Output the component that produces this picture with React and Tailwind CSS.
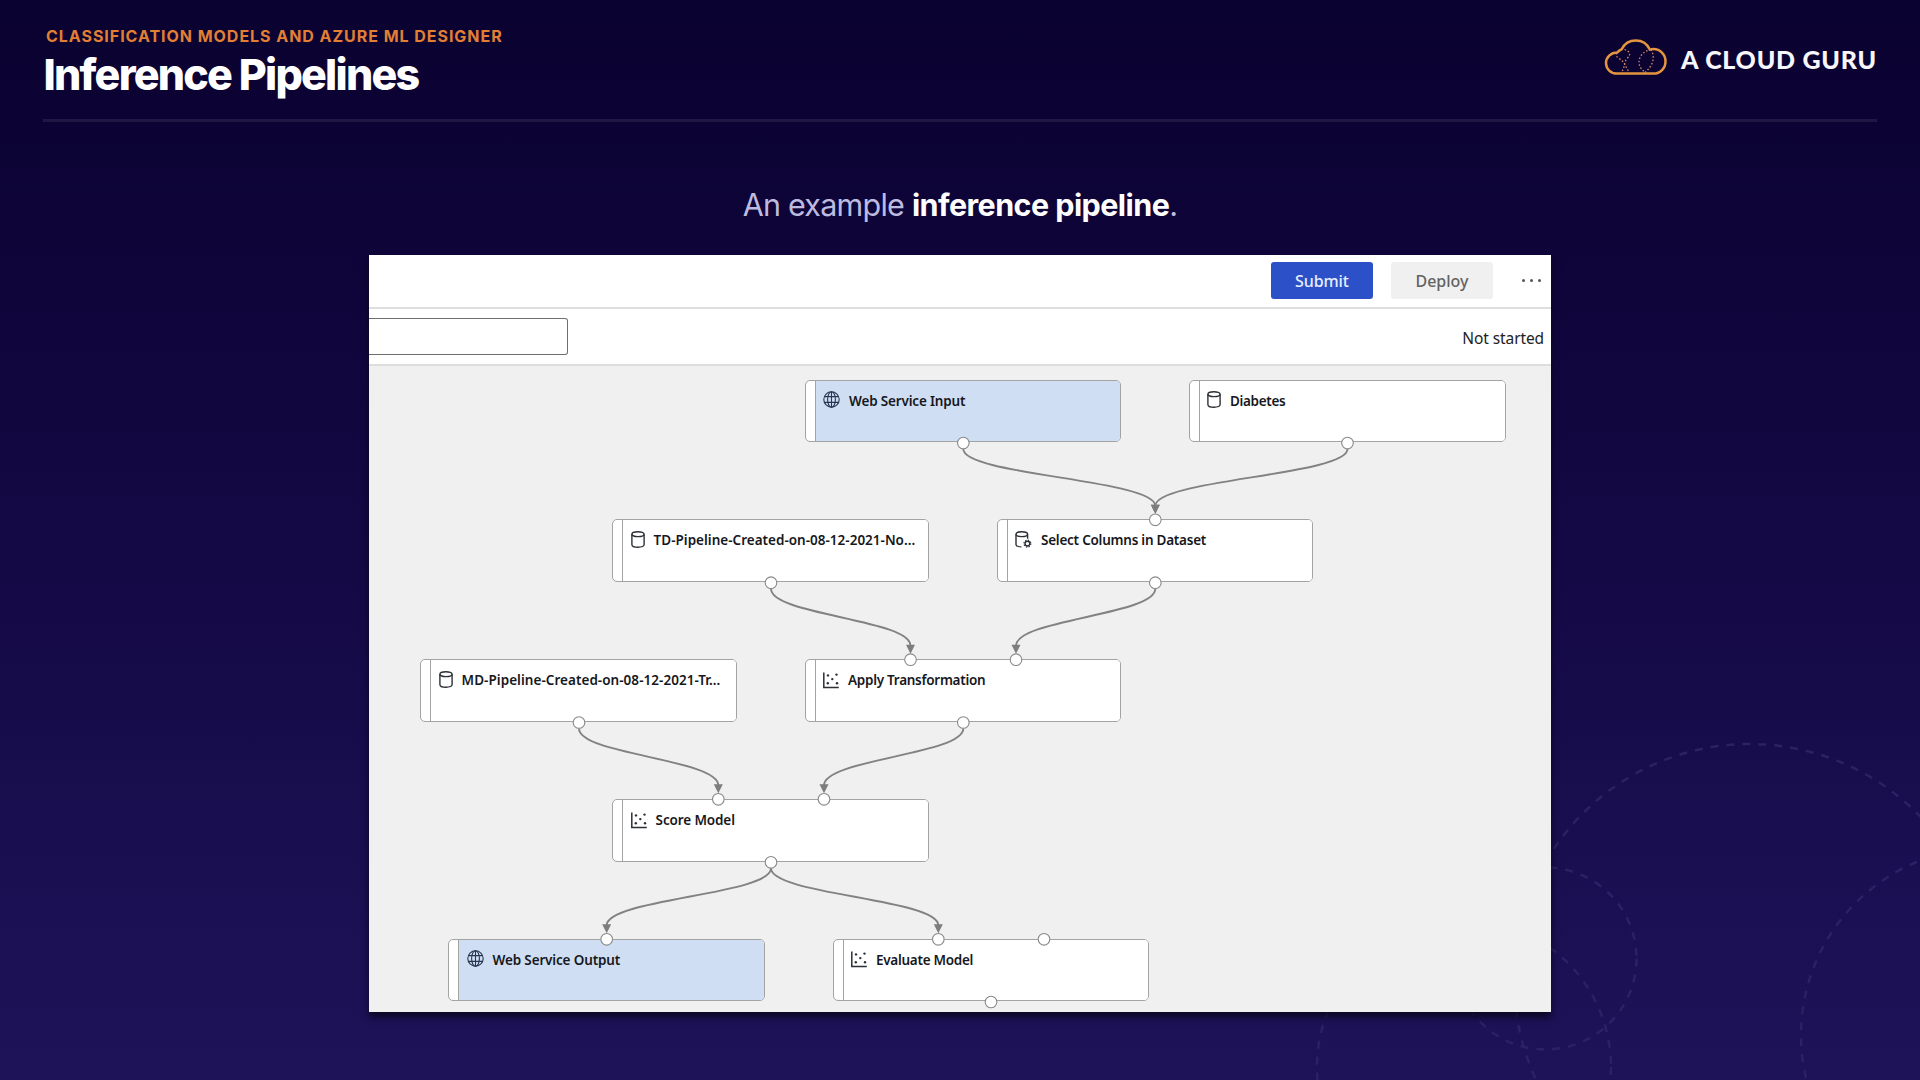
import React from "react";

const CANVAS_X = 369;
const CANVAS_Y = 366;

const nodes = [
  { x: 805, y: 380, w: 316, h: 62, icon: "globe", label: "Web Service Input", blue: true, ls: -0.17 },
  { x: 1189, y: 380, w: 317, h: 62, icon: "data", label: "Diabetes", ls: -0.33 },
  { x: 612, y: 519, w: 317, h: 63, icon: "data", label: "TD-Pipeline-Created-on-08-12-2021-No...", ls: 0.01, inset: 0.6 },
  { x: 997, y: 519, w: 316, h: 63, icon: "select", label: "Select Columns in Dataset", ls: -0.24 },
  { x: 420, y: 659, w: 317, h: 63, icon: "data", label: "MD-Pipeline-Created-on-08-12-2021-Tr...", ls: 0.04, inset: 0.6 },
  { x: 805, y: 659, w: 316, h: 63, icon: "scatter", label: "Apply Transformation", ls: -0.27 },
  { x: 612, y: 799, w: 317, h: 63, icon: "scatter", label: "Score Model", ls: -0.12, inset: 0.6 },
  { x: 448, y: 939, w: 317, h: 62, icon: "globe", label: "Web Service Output", blue: true, ls: -0.15, inset: 0.5 },
  { x: 833, y: 939, w: 316, h: 62, icon: "scatter", label: "Evaluate Model", ls: -0.28 },
];

const edges = [
  [963.3, 443, 1155.3, 519.8],
  [1347.5, 443, 1155.3, 519.8],
  [771, 582.7, 910.5, 659.7],
  [1155.3, 582.7, 1016, 659.7],
  [579, 722.5, 718.3, 799.3],
  [963.3, 722.5, 824, 799.3],
  [771, 862.3, 606.7, 939.3],
  [771, 862.3, 938.3, 939.3],
];

const ports = [
  [963.3, 443], [1347.5, 443], [1155.3, 519.8], [1155.3, 582.7], [771, 582.7], [910.5, 659.7], [1016, 659.7],
  [963.3, 722.5], [579, 722.5], [718.3, 799.3], [824, 799.3], [771, 862.3], [606.7, 939.3],
  [938.3, 939.3], [1044, 939.3], [991, 1002],
];

function Icon({ kind }) {
  const common = { fill: "none", stroke: "#2b2f36", strokeWidth: 1.2 };
  if (kind === "globe")
    return (
      <svg className="mr-[9px] h-[17px] w-[17px] shrink-0" viewBox="0 0 17 17" {...common} stroke="#26364f" strokeWidth="1.1">
        <circle cx="8.5" cy="8.5" r="7.7" />
        <ellipse cx="8.5" cy="8.5" rx="3.9" ry="7.7" />
        <path d="M8.5 .8v15.4M1.6 5.6h13.8M1.6 11.4h13.8" />
      </svg>
    );
  if (kind === "data")
    return (
      <svg className="mr-[9px] h-[17px] w-[14px] shrink-0" viewBox="0 0 14 17" {...common} strokeWidth="1.4">
        <ellipse cx="7" cy="3.2" rx="6.1" ry="2.4" />
        <path d="M.9 3.2v10.2c0 1.7 2.4 2.8 6.1 2.8s6.1-1.1 6.1-2.8V3.2" />
      </svg>
    );
  if (kind === "select")
    return (
      <svg className="mr-[9px] h-[17px] w-[17px] shrink-0" viewBox="0 0 17 17" {...common} strokeWidth="1.4">
        <ellipse cx="6.8" cy="3.2" rx="5.8" ry="2.4" />
        <path d="M1 3.2v10.2c0 1.4 2.2 2.4 5.4 2.5M12.6 3.2v4.6" />
        <circle cx="12.4" cy="12.6" r="2.4" strokeWidth="1.4" />
        <circle cx="12.4" cy="12.6" r="3.5" strokeWidth="1.1" strokeDasharray="1.4 1.35" />
      </svg>
    );
  return (
    <svg className="mt-px mr-[9px] h-[17px] w-[16px] shrink-0" viewBox="0 0 16 17" {...common}>
      <path d="M.8.5v15h15" strokeWidth="1.5" />
      <g fill="#2b2f36" stroke="none">
        <circle cx="5" cy="3.4" r="1.2" />
        <circle cx="13.5" cy="2.6" r="1.2" />
        <circle cx="9.3" cy="7.1" r="1.2" />
        <circle cx="4.8" cy="11.2" r="1.2" />
        <circle cx="14" cy="11.2" r="1.2" />
      </g>
    </svg>
  );
}

function Node({ node }) {
  const tall = node.h === 63;
  return (
    <div
      className="absolute flex overflow-hidden rounded-[5px] border border-[#a3a3a3] bg-white"
      style={{ left: node.x - CANVAS_X, top: node.y - CANVAS_Y, width: node.w, height: node.h }}
    >
      <div className="w-[10px] shrink-0 border-r border-[#a3a3a3]" />
      <div
        className={"flex flex-1 items-start " + (node.blue ? "bg-[#cfdef3]" : "bg-white")}
        style={{ paddingLeft: 7 + (node.inset || 0), paddingTop: tall ? 10.8 : 10 }}
      >
        <Icon kind={node.icon} />
        <span
          className="whitespace-nowrap text-[13.5px] leading-[20px] font-semibold text-[#16181c]"
          style={{ letterSpacing: node.ls, marginTop: tall ? -0.8 : 0 }}
        >
          {node.label}
        </span>
      </div>
    </div>
  );
}

function Graph() {
  return (
    <div className="relative flex-1 overflow-hidden bg-[#f0f0f0]">
      {nodes.map((n) => (
        <Node key={n.label} node={n} />
      ))}
      <svg className="absolute top-0 left-0" width="1182" height="646" viewBox="369 366 1182 646">
        {edges.map(([x1, y1, x2, y2]) => {
          const a = y1 + 6;
          const b = y2 - 14;
          const h = (b - a) * 0.46;
          return (
            <g key={`${x1}-${y1}-${x2}`}>
              <path d={`M${x1} ${a}C${x1} ${a + h} ${x2} ${b - h} ${x2} ${b}`} fill="none" stroke="#828282" strokeWidth="1.9" />
              <path d={`M${x2 - 4.5} ${b - 1}h9l-4.5 9z`} fill="#7d7d7d" />
            </g>
          );
        })}
        {ports.map(([x, y]) => (
          <circle key={`${x}-${y}`} cx={x} cy={y} r="5.8" fill="#fff" stroke="#8a8a8a" strokeWidth="1.1" />
        ))}
      </svg>
    </div>
  );
}

function Logo() {
  return (
    <div className="flex items-center">
      <svg className="h-[38px] w-[64px]" viewBox="0 0 64 38" fill="none">
        <path
          d="M13 35.6h36.5c6.6 0 12-5.3 12-12.2s-5.4-12.3-12-12.3c-1.3 0-2.6.2-3.7.5C43.3 6 38 2.5 31.8 2.5c-6 0-11.5 3.4-14.1 8.7-1.7.6-3.4 1.9-4.5 3.3C6.9 14.5 2 19.2 2 25.1s4.8 10.5 11 10.5z"
          stroke="#e5953f"
          strokeWidth="2.5"
        />
        <g stroke="#d98a66" strokeWidth="1.3" strokeDasharray="1.5 2">
          <path d="M16 13c-4.5 2-5 5-1 7.5 6 3.5 6 8 10.5 14" />
          <path d="M20.5 11.5c6 2 6.5 5.5 2.5 9-3.5 4-1.5 9-6 14" />
          <path d="M47 11.5c-11 2-15.5 13-9 20l3 3" />
          <path d="M47 11.5c5 9 1 17-6 23" />
        </g>
      </svg>
      <span className="mt-[3px] ml-[13px] w-[196px] whitespace-nowrap font-[Lato,sans-serif] text-[25px] leading-[30px] font-black tracking-[0.75px] text-[#f7f6fb]">
        A CLOUD GURU
      </span>
    </div>
  );
}

function Backdrop() {
  return (
    <svg className="absolute inset-0" width="1920" height="1080" fill="none" stroke="#2b2164" strokeWidth="2.5" strokeDasharray="8 8">
      <circle cx="1750" cy="980" r="236" />
      <circle cx="1545.5" cy="958.5" r="91" />
      <circle cx="1464" cy="1067" r="147" />
      <circle cx="1988" cy="1035" r="187" />
    </svg>
  );
}

export default function App() {
  return (
    <div className="relative h-[1080px] w-[1920px] overflow-hidden bg-linear-to-b from-[#0a0230] to-[#1e1359] font-[Inter,sans-serif]">
      <Backdrop />
      <div className="relative flex h-full flex-col">
        <header className="mx-[43px] flex h-[122px] shrink-0 items-start justify-between border-b-[3px] border-[#1f1744]">
          <div className="pt-[26px]">
            <div className="pl-[3px] text-[16px] leading-[20px] font-bold tracking-[0.96px] whitespace-nowrap text-[#e27f35]">
              CLASSIFICATION MODELS AND AZURE ML DESIGNER
            </div>
            <h1 className="mt-[3px] ml-[0.5px] text-[43px] leading-[50px] font-extrabold tracking-[-1.78px] whitespace-nowrap text-white">
              Inference Pipelines
            </h1>
          </div>
          <div className="pt-[38px]">
            <Logo />
          </div>
        </header>
        <p className="mt-[63px] h-[40px] shrink-0 text-center text-[30.5px] leading-[40px] tracking-[-0.77px] whitespace-nowrap text-[#bdbbe0]">
          An example <b className="font-bold tracking-[-0.57px] text-white">inference pipeline</b>.
        </p>
        <main className="mt-[30px] ml-[369px] flex h-[757px] w-[1182px] shrink-0 flex-col bg-white font-['Noto_Sans',sans-serif] shadow-[0_5px_7px_rgba(8,6,24,0.85)]">
          <div className="flex h-[54px] shrink-0 items-start justify-end border-b-2 border-[#dedede] pt-[7px] pr-[10px]">
            <button className="h-[37px] w-[102px] rounded-[3px] bg-[#2b50c8] text-[16px] font-medium tracking-[-0.1px] text-[#e6eeff]">Submit</button>
            <button className="ml-[18px] h-[37px] w-[102px] rounded-[3px] bg-[#f0f0f0] text-[16px] font-medium text-[#626262]">Deploy</button>
            <div className="mt-[17px] ml-[29px] flex w-[19px] justify-between">
              <i className="h-[3px] w-[3px] rounded-full bg-[#555]" />
              <i className="h-[3px] w-[3px] rounded-full bg-[#555]" />
              <i className="h-[3px] w-[3px] rounded-full bg-[#555]" />
            </div>
          </div>
          <div className="flex h-[57px] shrink-0 items-start justify-between border-b-2 border-[#dedede] pr-[7px]">
            <div className="mt-[9px] h-[37px] w-[199px] rounded-r-[3px] border border-l-0 border-[#6f6f6f]" />
            <span className="mt-[17px] text-[15.5px] leading-[24px] tracking-[-0.1px] whitespace-nowrap text-[#222]">Not started</span>
          </div>
          <Graph />
        </main>
      </div>
    </div>
  );
}
